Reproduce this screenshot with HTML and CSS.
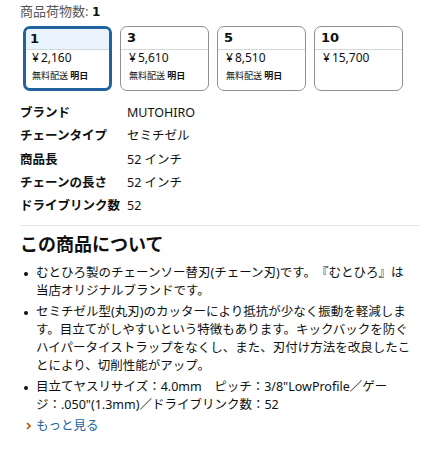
FILE: index.html
```html
<!DOCTYPE html>
<html lang="ja">
<head>
<meta charset="utf-8">
<link rel="stylesheet" href="styles.css">
</head>
<body>
<div class="wrap">
  <div class="qty-label">商品荷物数: <b class="num">1</b></div>
  <div class="swatches">
    <div class="card sel">
      <div class="card-head"><span class="num">1</span></div>
      <div class="card-body">
        <div class="price"><span class="yen">¥</span>2,160</div>
        <div class="ship">無料配送 <b>明日</b></div>
      </div>
    </div>
    <div class="card">
      <div class="card-head"><span class="num">3</span></div>
      <div class="card-body">
        <div class="price"><span class="yen">¥</span>5,610</div>
        <div class="ship">無料配送 <b>明日</b></div>
      </div>
    </div>
    <div class="card">
      <div class="card-head"><span class="num">5</span></div>
      <div class="card-body">
        <div class="price"><span class="yen">¥</span>8,510</div>
        <div class="ship">無料配送 <b>明日</b></div>
      </div>
    </div>
    <div class="card">
      <div class="card-head"><span class="num">10</span></div>
      <div class="card-body">
        <div class="price"><span class="yen">¥</span>15,700</div>
      </div>
    </div>
  </div>

  <div class="specs">
    <div class="k">ブランド</div><div class="v">MUTOHIRO</div>
    <div class="k">チェーンタイプ</div><div class="v">セミチゼル</div>
    <div class="k">商品長</div><div class="v">52 インチ</div>
    <div class="k">チェーンの長さ</div><div class="v">52 インチ</div>
    <div class="k">ドライブリンク数</div><div class="v">52</div>
  </div>

  <hr class="divider">

  <h2 class="title">この商品について</h2>
  <ul class="bullets">
    <li><span>むとひろ製のチェーンソー替刃(チェーン刃)です。『むとひろ』は当店オリジナルブランドです。</span></li>
    <li><span>セミチゼル型(丸刃)のカッターにより抵抗が少なく振動を軽減します。目立てがしやすいという特徴もあります。キックバックを防ぐハイパータイストラップをなくし、また、刃付け方法を改良したことにより、切削性能がアップ。</span></li>
    <li><span>目立てヤスリサイズ：4.0mm　ピッチ：3/8"LowProfile／ゲージ：.050"(1.3mm)／ドライブリンク数：52</span></li>
  </ul>
  <a class="more" href="#"><svg class="chev" width="5" height="8" viewBox="0 0 5 8"><polyline points="1,1 4,4 1,7" fill="none" stroke="#c45500" stroke-width="1.6"/></svg><span>もっと見る</span></a>
</div>
</body>
</html>
```

FILE: styles.css
```css
html, body {
  margin: 0;
  padding: 0;
  background: #ffffff;
}
body {
  font-family: "Noto Sans", "Noto Sans CJK JP", sans-serif;
  color: #0f1111;
  font-size: 12.5px;
  line-height: 18px;
  text-spacing-trim: space-all;
}
.wrap {
  padding: 2px 12px 0 20px;
}
.qty-label {
  font-size: 13px;
  line-height: 18px;
  color: #565959;
}
.num {
  font-family: "DejaVu Sans", "Noto Sans CJK JP", sans-serif;
  font-weight: bold;
  color: #0f1111;
}
.qty-label .num {
  font-size: 12px;
}
.swatches {
  display: flex;
  gap: 8px;
  margin: 5px 0 0 3px;
}
.card {
  box-sizing: border-box;
  width: 89px;
  height: 65px;
  border: 1px solid #8d9096;
  border-radius: 7px;
  overflow: hidden;
}
.card-head {
  height: 22px;
  line-height: 22px;
  padding-left: 6px;
  border-bottom: 1px solid #d5d9d9;
}
.card-head .num {
  font-size: 13px;
}
.card.sel {
  border: 3px solid #2162a1;
}
.card.sel .card-head {
  background: #e8f3fd;
  height: 20px;
  line-height: 20px;
  padding-left: 4px;
}
.card-body {
  padding-left: 8px;
}
.card.sel .card-body {
  padding-left: 6px;
}
.price {
  font-size: 12px;
  line-height: 16px;
}
.yen {
  margin-right: 2px;
}
.ship {
  font-size: 9px;
  line-height: 12px;
  margin-top: 4px;
  color: #0f1111;
}
.ship b {
  font-weight: bold;
}
.specs {
  display: grid;
  grid-template-columns: 107px 1fr;
  margin-top: 10px;
}
.specs .k, .specs .v {
  line-height: 17.25px;
  padding: 3px 0;
}
.specs .k {
  font-weight: bold;
}
.divider {
  border: 0;
  border-top: 1px solid #e3e6e6;
  margin: 8px 0 0 0;
  height: 0;
}
.title {
  font-size: 18px;
  line-height: 24px;
  font-weight: bold;
  margin: 6px 0 8px 0;
}
.bullets {
  list-style: none;
  margin: 0 8px 0 4px;
  padding: 0;
}
.bullets li {
  display: flex;
  margin-bottom: 3px;
}
.bullets li::before {
  content: "";
  flex: none;
  width: 4px;
  height: 4px;
  border-radius: 50%;
  background: #0f1111;
  margin: 8px 8px 0 0;
}
.more {
  display: flex;
  align-items: center;
  margin-top: 3px;
  padding-left: 6px;
  color: #2162a1;
  text-decoration: none;
  line-height: 18px;
}
.chev {
  margin-right: 5px;
}
```
